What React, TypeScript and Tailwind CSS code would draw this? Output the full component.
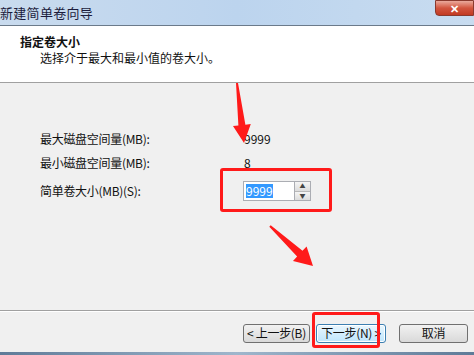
const font = "font-['Noto_Sans_CJK_SC','Noto_Sans',sans-serif]";

const WinButton = ({ label, active }: { label: string; active?: boolean }) => (
  <div
    className={`flex items-center justify-center h-[19px] rounded-[3px] border text-[12px] leading-none tracking-[-0.3px] ${
      active
        ? "border-[#3c7fb1] bg-gradient-to-b from-[#eaf6fd] to-[#bee6fd] shadow-[inset_0_0_0_1px_#fff]"
        : "border-[#707070] bg-gradient-to-b from-[#f2f2f2] to-[#d9d9d9]"
    }`}
  >
    {label}
  </div>
);

const App = () => {
  return (
    <div className={`relative w-[474px] h-[355px] overflow-hidden bg-[#f0f0f0] text-[#111] ${font}`}>
      {/* title bar */}
      <div className="relative h-[26px] flex items-center border-b border-[#6b7a8a] bg-gradient-to-r from-[#c9dbee] via-[#bcd4ee] to-[#c8dcf0]">
        <span className="text-[13px] text-[#1c1c3c] tracking-[0.3px]">新建简单卷向导</span>
        <div className="absolute right-0 top-0 w-[39px] h-[16px] rounded-bl-[4px] border border-[#8a3a2e] bg-gradient-to-b from-[#e9a99c] via-[#d2553f] to-[#c23a22] flex items-center justify-center">
          <span className="text-white text-[11px] font-bold leading-none">✕</span>
        </div>
      </div>

      {/* header */}
      <div className="h-[57px] bg-white border-b border-[#a0a0a0] pl-[20px] pt-[8px] text-[12px] leading-[16px]">
        <div className="font-bold">指定卷大小</div>
        <div className="pl-[20px]">选择介于最大和最小值的卷大小。</div>
      </div>

      {/* body */}
      <div className="h-[228px] pl-[40px] pt-[46px] text-[12px] border-b border-[#a0a0a0]">
        <div className="flex flex-col">
          <div className="h-[20px] flex items-center">
            <span className="w-[204px] tracking-[-0.3px]">最大磁盘空间量(MB):</span>
            <span>9999</span>
          </div>
          <div className="h-[20px] mt-[4px] flex items-center">
            <span className="w-[204px] tracking-[-0.3px]">最小磁盘空间量(MB):</span>
            <span>8</span>
          </div>
          <div className="h-[20px] mt-[8px] flex items-center">
            <span className="w-[203px] tracking-[-0.3px]">简单卷大小(MB)(S):</span>
            <div className="flex h-[20px]">
              <div className="w-[52px] h-full bg-white border border-[#abadb3] flex items-center pl-[2px]">
                <span className="bg-[#3399ff] text-white leading-[14px]">9999</span>
              </div>
              <div className="w-[16px] h-full flex flex-col border border-l-0 border-[#abadb3]">
                <div className="flex-1 flex items-center justify-center bg-gradient-to-b from-[#f5f5f5] to-[#dcdcdc] border-b border-[#b8b8b8]">
                  <span className="text-[6px] text-[#444] leading-none">▲</span>
                </div>
                <div className="flex-1 flex items-center justify-center bg-gradient-to-b from-[#f5f5f5] to-[#dcdcdc]">
                  <span className="text-[6px] text-[#444] leading-none">▼</span>
                </div>
              </div>
            </div>
          </div>
        </div>
      </div>

      {/* footer */}
      <div className="h-[41px] border-t border-white flex items-center justify-end pr-[6px] pt-[2px]">
        <div className="w-[67px]">
          <WinButton label="< 上一步(B)" />
        </div>
        <div className="w-[70px] ml-[6px]">
          <WinButton label="下一步(N) >" active />
        </div>
        <div className="w-[69px] ml-[13px]">
          <WinButton label="取消" />
        </div>
      </div>

      {/* taskbar strip */}
      <div className="h-[3px] bg-gradient-to-r from-[#5f7b98] via-[#9fb6cc] to-[#5f7b98]" />

      {/* annotations */}
      <div className="absolute left-[220px] top-[168px] w-[112px] h-[44px] border-[3px] border-[#ff1a1a] rounded-[3px]" />
      <div className="absolute left-[312px] top-[312px] w-[68px] h-[36px] border-[3px] border-[#ff1a1a] rounded-[3px]" />
      <svg className="absolute left-0 top-0" width="474" height="355" viewBox="0 0 474 355">
        <polygon
          fill="#ff1a1a"
          points="236,83 238,83 245.4,124.7 250.8,124.1 244,143 233,126.1 238.4,125.5"
        />
        <polygon
          fill="#ff1a1a"
          points="269.3,226.7 270.7,225.3 302.5,250.8 306.6,246.4 313,266 293,261 297.1,256.6"
        />
      </svg>
    </div>
  );
};

export default App;
